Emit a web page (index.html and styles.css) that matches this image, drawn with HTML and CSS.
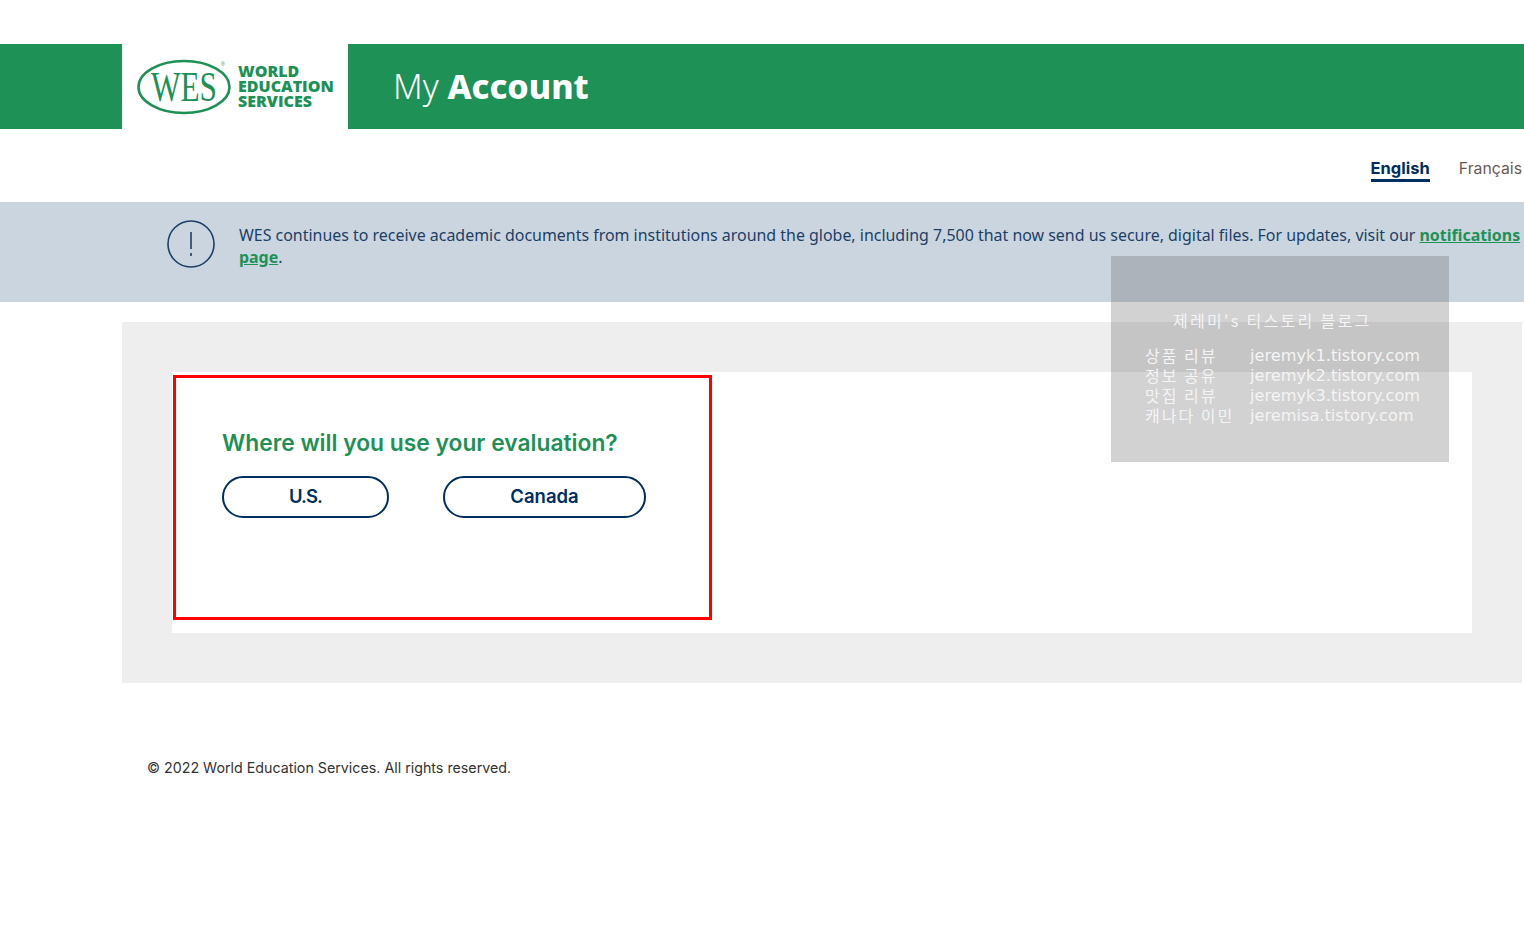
FILE: index.html
```html
<!DOCTYPE html>
<html lang="en">
  <head>
    <meta charset="UTF-8" />
    <meta name="viewport" content="width=device-width, initial-scale=1.0" />
    <title>My Account</title>
    <link rel="stylesheet" href="styles.css">
  </head>
  <body>
    <header class="site-header">
      <div class="logo-box">
        <svg class="logo-mark" width="98" height="58" viewBox="0 0 98 58">
          <ellipse cx="48" cy="29" rx="45.5" ry="26" fill="none" stroke="#1e9156" stroke-width="2.6" />
          <text class="logo-wes" x="48" y="43" text-anchor="middle" textLength="66" lengthAdjust="spacingAndGlyphs">WES</text>
          <text class="logo-reg" x="85" y="8">®</text>
        </svg>
        <div class="logo-name">WORLD<br />EDUCATION<br />SERVICES</div>
      </div>
      <h1 class="page-title">My <b>Account</b></h1>
    </header>

    <nav class="lang-bar">
      <a class="lang lang-active" href="#">English</a>
      <a class="lang" href="#">Français</a>
    </nav>

    <section class="notice">
      <svg class="notice-icon" width="48" height="48" viewBox="0 0 48 48">
        <circle cx="24" cy="24" r="23" fill="none" stroke="#1c3f66" stroke-width="1.6" />
        <path d="M24 12V29M24 33V36" fill="none" stroke="#1c3f66" stroke-width="1.6" />
      </svg>
      <p class="notice-text">WES continues to receive academic documents from institutions around the globe, including 7,500 that now send us secure, digital files. For updates, visit our <a href="#">notifications page</a>.</p>
    </section>

    <main class="main-area">
      <div class="panel">
        <div class="question-box">
          <h2>Where will you use your evaluation?</h2>
          <div class="choices">
            <button class="choice choice-us" type="button">U.S.</button>
            <button class="choice choice-ca" type="button">Canada</button>
          </div>
        </div>
      </div>
    </main>

    <footer class="site-footer">© 2022 World Education Services. All rights reserved.</footer>

    <aside class="watermark">
      <div class="wm-title">제레미's 티스토리 블로그</div>
      <div class="wm-list">
        <span>상품 리뷰</span><span>jeremyk1.tistory.com</span>
        <span>정보 공유</span><span>jeremyk2.tistory.com</span>
        <span>맛집 리뷰</span><span>jeremyk3.tistory.com</span>
        <span>캐나다 이민</span><span>jeremisa.tistory.com</span>
      </div>
    </aside>
  </body>
</html>
```

FILE: styles.css
```css
body {
  margin: 0;
  padding-top: 44px;
  height: 889px;
  overflow: hidden;
  background: #fff;
  font-family: "Inter", "Noto Sans", sans-serif;
  color: #002f5f;
}
.site-header {
  display: flex;
  height: 85px;
  padding-left: 122px;
  background: #1e9156;
}
.logo-box {
  display: flex;
  align-items: center;
  width: 226px;
  padding-left: 14px;
  box-sizing: border-box;
  background: #fff;
}
.logo-mark {
  flex: none;
  overflow: visible;
}
.logo-wes {
  font-family: "Liberation Serif", serif;
  font-size: 43px;
  fill: #1e9156;
}
.logo-reg {
  font-family: "Liberation Sans", sans-serif;
  font-size: 5px;
  fill: #1e9156;
}
.logo-name {
  margin-left: 4px;
  font-family: "Open Sans", sans-serif;
  font-size: 16px;
  font-weight: 800;
  line-height: 15px;
  color: #1e9156;
}
.page-title {
  margin: 0 0 2px 45px;
  align-self: center;
  font-family: "Noto Sans", sans-serif;
  font-size: 34px;
  font-weight: 300;
  color: #fff;
}
.page-title b {
  font-weight: 800;
}
.lang-bar {
  display: flex;
  justify-content: flex-end;
  align-items: flex-start;
  gap: 29px;
  height: 73px;
  width: 1522px;
  padding-top: 29px;
  box-sizing: border-box;
}
.lang {
  font-family: "Inter", sans-serif;
  font-size: 15.8px;
  line-height: 21px;
  color: #6b5a55;
  text-decoration: none;
}
.lang-active {
  font-size: 16.5px;
  font-weight: 700;
  color: #002f5f;
  border-bottom: 3px solid #002f5f;
}
.notice {
  display: flex;
  height: 100px;
  padding-left: 167px;
  box-sizing: border-box;
  background: #cbd5df;
}
.notice-icon {
  flex: none;
  margin-top: 18px;
}
.notice-text {
  margin: 22px 2px 0 24px;
  font-family: "Noto Sans", sans-serif;
  font-size: 15.94px;
  line-height: 22px;
  color: #1c3f66;
}
.notice-text a {
  font-weight: 700;
  color: #1e9156;
}
.main-area {
  width: 1400px;
  margin: 20px 0 0 122px;
  padding: 50px;
  box-sizing: border-box;
  background: #eee;
}
.panel {
  height: 261px;
  padding: 3px 1px;
  box-sizing: border-box;
  background: #fff;
}
.question-box {
  width: 539px;
  height: 245px;
  padding: 51px 46px 0;
  box-sizing: border-box;
  border: 3px solid #f00;
}
.question-box h2 {
  margin: 0;
  font-size: 22.8px;
  font-weight: 600;
  line-height: 28px;
  color: #1e9156;
}
.choices {
  display: flex;
  gap: 54px;
  margin-top: 19px;
}
.choice {
  height: 42px;
  padding-bottom: 3px;
  border: 2px solid #002f5f;
  border-radius: 21px;
  background: #fff;
  font-family: "Inter", "Noto Sans", sans-serif;
  font-size: 18.5px;
  font-weight: 600;
  color: #002f5f;
}
.choice-us {
  width: 167px;
  letter-spacing: -1px;
}
.choice-ca {
  width: 203px;
}
.site-footer {
  margin: 76px 0 0 147px;
  font-size: 14.25px;
  line-height: 18px;
  color: #333;
}
.watermark {
  position: absolute;
  left: 1111px;
  top: 256px;
  width: 338px;
  height: 206px;
  padding: 54px 0 0 34px;
  box-sizing: border-box;
  background: rgba(90, 90, 90, 0.27);
  font-family: "Noto Sans CJK KR", sans-serif;
  color: #f4f4f4;
}
.wm-title {
  margin-left: 28px;
  font-size: 16px;
  line-height: 20px;
  letter-spacing: 2.3px;
}
.wm-list {
  display: grid;
  grid-template-columns: 105px 1fr;
  margin-top: 16px;
  font-family: "DejaVu Sans", "Noto Sans CJK KR", sans-serif;
  font-size: 16.2px;
  line-height: 20px;
}
.wm-list span:nth-child(odd) {
  margin-top: -1px;
  font-family: "Noto Sans CJK KR", sans-serif;
  font-size: 16px;
  letter-spacing: 2px;
}
```
